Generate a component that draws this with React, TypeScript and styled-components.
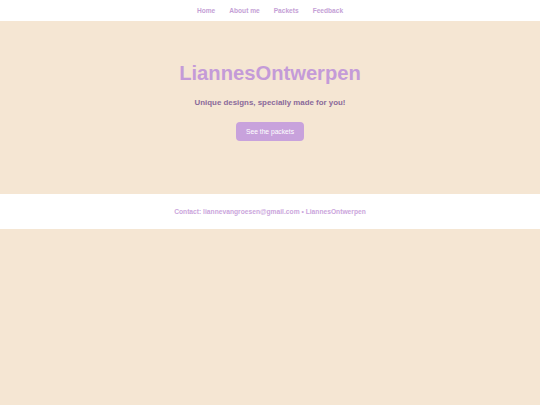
import React from "react";
import styled, { createGlobalStyle } from "styled-components";

const Global = createGlobalStyle`
  html, body { margin: 0; padding: 0; }
  body {
    background: #f5e6d3;
    font-family: "Liberation Sans", Arial, sans-serif;
  }
`;

const Page = styled.div`
  min-height: 405px;
  background: #f5e6d3;
`;

const Nav = styled.nav`
  height: 21px;
  background: #ffffff;
  display: flex;
  justify-content: center;
  align-items: center;
  gap: 14px;
`;

const NavLink = styled.a`
  color: #c59fd6;
  font-size: 6.6px;
  font-weight: 700;
  text-decoration: none;
  cursor: pointer;
`;

const Hero = styled.section`
  height: 173px;
  display: flex;
  flex-direction: column;
  align-items: center;
  padding-top: 40px;
  box-sizing: border-box;
`;

const Title = styled.h1`
  margin: 0;
  color: #c49bd8;
  font-size: 20.2px;
  font-weight: 700;
  line-height: 24px;
`;

const Subtitle = styled.p`
  margin: 13px 0 0;
  color: #8a6a9a;
  font-size: 7.9px;
  font-weight: 700;
  line-height: 10px;
`;

const Button = styled.button`
  margin-top: 14px;
  width: 68px;
  height: 19px;
  border: none;
  border-radius: 4px;
  background: #c8a2dc;
  color: #ffffff;
  font-family: "Liberation Sans", Arial, sans-serif;
  font-size: 6.7px;
  padding: 0;
  cursor: pointer;
`;

const Footer = styled.footer`
  height: 35px;
  background: #ffffff;
  display: flex;
  justify-content: center;
  align-items: center;
`;

const FooterText = styled.p`
  margin: 0;
  color: #cba6dc;
  font-size: 6.7px;
  font-weight: 700;
`;

export default function App() {
  return (
    <Page>
      <Global />
      <Nav>
        <NavLink>Home</NavLink>
        <NavLink>About me</NavLink>
        <NavLink>Packets</NavLink>
        <NavLink>Feedback</NavLink>
      </Nav>
      <Hero>
        <Title>LiannesOntwerpen</Title>
        <Subtitle>Unique designs, specially made for you!</Subtitle>
        <Button>See the packets</Button>
      </Hero>
      <Footer>
        <FooterText>Contact: liannevangroesen@gmail.com • LiannesOntwerpen</FooterText>
      </Footer>
    </Page>
  );
}
